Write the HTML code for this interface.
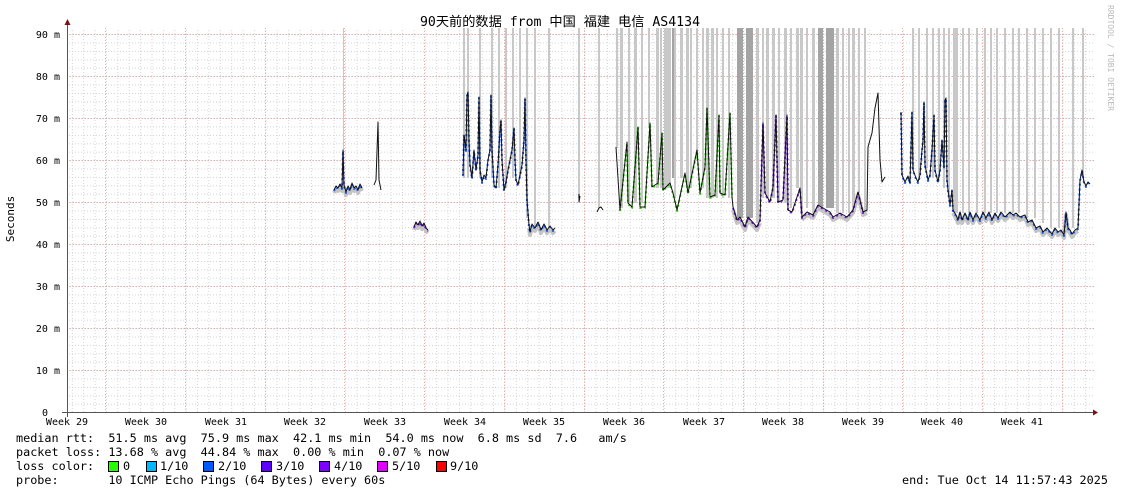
<!DOCTYPE html>
<html><head><meta charset="utf-8"><style>
html,body{margin:0;padding:0;background:#fff;}
body{width:1121px;height:494px;overflow:hidden;position:relative;font-family:"DejaVu Sans Mono","Liberation Mono","Noto Sans CJK SC",monospace;}
.leg{position:absolute;left:16px;font-size:11.8px;white-space:pre;color:#000;line-height:14px;}
.sq{position:absolute;top:461px;width:9px;height:9px;border:1px solid #000;}
</style></head><body>
<svg width="1121" height="494" style="position:absolute;left:0;top:0" xmlns="http://www.w3.org/2000/svg">
<defs>
<pattern id="mv" x="71.8" y="0" width="11.386" height="494" patternUnits="userSpaceOnUse"><line x1="0.5" y1="0" x2="0.5" y2="494" stroke="#d4d4d4" stroke-dasharray="1,2"/></pattern>
<pattern id="mh" x="0" y="0.5" width="1121" height="8.4" patternUnits="userSpaceOnUse"><line x1="0" y1="0.5" x2="1121" y2="0.5" stroke="#d4d4d4" stroke-dasharray="1,2"/></pattern>
</defs>
<rect x="67" y="28" width="1027" height="384" fill="url(#mv)"/>
<rect x="67" y="28" width="1027" height="384" fill="url(#mh)"/>
<g stroke="#eaa" stroke-dasharray="1,2">
<line x1="67" y1="34.5" x2="1094" y2="34.5"/><line x1="67" y1="76.5" x2="1094" y2="76.5"/><line x1="67" y1="118.5" x2="1094" y2="118.5"/><line x1="67" y1="160.5" x2="1094" y2="160.5"/><line x1="67" y1="202.5" x2="1094" y2="202.5"/><line x1="67" y1="244.5" x2="1094" y2="244.5"/><line x1="67" y1="286.5" x2="1094" y2="286.5"/><line x1="67" y1="328.5" x2="1094" y2="328.5"/><line x1="67" y1="370.5" x2="1094" y2="370.5"/>
<line x1="105.5" y1="28" x2="105.5" y2="412"/><line x1="185.5" y1="28" x2="185.5" y2="412"/><line x1="265.5" y1="28" x2="265.5" y2="412"/><line x1="344.5" y1="28" x2="344.5" y2="412"/><line x1="424.5" y1="28" x2="424.5" y2="412"/><line x1="504.5" y1="28" x2="504.5" y2="412"/><line x1="584.5" y1="28" x2="584.5" y2="412"/><line x1="663.5" y1="28" x2="663.5" y2="412"/><line x1="743.5" y1="28" x2="743.5" y2="412"/><line x1="823.5" y1="28" x2="823.5" y2="412"/><line x1="902.5" y1="28" x2="902.5" y2="412"/><line x1="982.5" y1="28" x2="982.5" y2="412"/><line x1="1062.5" y1="28" x2="1062.5" y2="412"/>
</g>
<g fill="#c8c8c8">
<rect x="343" y="28" width="1" height="160"/>
<rect x="463" y="28" width="2" height="150"/><rect x="467" y="28" width="2" height="150"/><rect x="479" y="28" width="2" height="150"/><rect x="491" y="28" width="2" height="150"/><rect x="498" y="28" width="2" height="160"/><rect x="505" y="28" width="2" height="160"/><rect x="512" y="28" width="2" height="150"/><rect x="519" y="28" width="2" height="150"/><rect x="526" y="28" width="2" height="190"/><rect x="534" y="28" width="2" height="200"/><rect x="548" y="28" width="2" height="200"/><rect x="578" y="28" width="2" height="170"/><rect x="598" y="28" width="2" height="180"/>
<rect x="616" y="28" width="2" height="120"/><rect x="620" y="28" width="3" height="180"/><rect x="628" y="28" width="2" height="175"/><rect x="634" y="28" width="3" height="175"/><rect x="641" y="28" width="2" height="175"/><rect x="648" y="28" width="2" height="100"/><rect x="656" y="28" width="3" height="160"/><rect x="660" y="28" width="2" height="160"/><rect x="664" y="28" width="4" height="160"/><rect x="668" y="28" width="3" height="160"/><rect x="674" y="28" width="2" height="170"/><rect x="680" y="28" width="3" height="150"/><rect x="686" y="28" width="3" height="160"/><rect x="690" y="28" width="2" height="160"/><rect x="696" y="28" width="2" height="130"/><rect x="702" y="28" width="2" height="160"/><rect x="706" y="28" width="3" height="170"/><rect x="711" y="28" width="3" height="170"/><rect x="716" y="28" width="2" height="170"/><rect x="722" y="28" width="2" height="170"/><rect x="728" y="28" width="2" height="170"/><rect x="756" y="28" width="3" height="195"/><rect x="762" y="28" width="2" height="170"/><rect x="766" y="28" width="3" height="170"/><rect x="772" y="28" width="3" height="170"/><rect x="778" y="28" width="2" height="175"/><rect x="784" y="28" width="3" height="175"/><rect x="790" y="28" width="2" height="180"/><rect x="796" y="28" width="3" height="160"/><rect x="800" y="28" width="3" height="185"/><rect x="806" y="28" width="2" height="180"/><rect x="812" y="28" width="3" height="185"/><rect x="836" y="28" width="3" height="185"/><rect x="842" y="28" width="2" height="185"/><rect x="848" y="28" width="2" height="185"/><rect x="852" y="28" width="3" height="185"/><rect x="858" y="28" width="2" height="165"/><rect x="864" y="28" width="2" height="185"/>
<rect x="912" y="28" width="2" height="140"/><rect x="918" y="28" width="2" height="150"/><rect x="926" y="28" width="2" height="140"/><rect x="932" y="28" width="2" height="150"/><rect x="938" y="28" width="2" height="150"/><rect x="943" y="28" width="2" height="160"/><rect x="948" y="28" width="2" height="170"/><rect x="953" y="28" width="5" height="185"/><rect x="962" y="28" width="2" height="185"/><rect x="968" y="28" width="2" height="185"/><rect x="976" y="28" width="2" height="185"/><rect x="984" y="28" width="2" height="185"/><rect x="990" y="28" width="2" height="185"/><rect x="996" y="28" width="2" height="185"/><rect x="1004" y="28" width="2" height="185"/><rect x="1012" y="28" width="2" height="185"/><rect x="1018" y="28" width="2" height="185"/><rect x="1026" y="28" width="2" height="190"/><rect x="1034" y="28" width="2" height="190"/><rect x="1042" y="28" width="2" height="195"/><rect x="1050" y="28" width="2" height="200"/><rect x="1058" y="28" width="2" height="200"/><rect x="1072" y="28" width="2" height="200"/><rect x="1082" y="28" width="2" height="150"/>
</g>
<g fill="#a4a4a4">
<rect x="737" y="28" width="6" height="190"/><rect x="746" y="28" width="7" height="190"/><rect x="818" y="28" width="5" height="180"/><rect x="826" y="28" width="8" height="180"/><rect x="672" y="28" width="2" height="150"/>
</g>
<g fill="none" stroke-linejoin="round">
<g stroke="#c4c4c4" stroke-width="4" transform="translate(0,3)">
<polyline points="334,190 336,186 338,188 340,184 342,188 344,185 346,192 348,186 350,190 352,183 354,188 356,186 358,190 360,184 362,188"/>
<polyline points="414,227 416,222 418,225 420,221 422,226 424,223 426,228 428,230"/>
<polyline points="529,225 530,232 532,224 535,228 538,222 541,230 544,224 547,230 550,226 553,230 555,228"/>
<polyline points="733,207 737,220 740,217 745,227 748,217 757,227 760,220"/>
<polyline points="802,217 807,212 813,215 818,205 823,208 830,212 833,217 840,213 847,217 853,210 858,192 863,212 867,210"/>
<polyline points="953,210 956,215 958,220 960,212 962,220 965,213 968,220 970,212 973,220 976,213 980,220 983,212 986,218 989,212 992,220 995,213 998,218 1001,212 1005,217 1010,212 1013,215 1016,213 1020,217 1025,215 1028,222 1032,220 1036,228 1040,226 1043,232 1047,228 1052,234 1055,228 1058,232 1061,230 1064,235 1066,212 1068,228 1070,230 1072,234 1075,230 1078,228"/>
</g>
<g stroke="#1a5cff" stroke-width="2" stroke-dasharray="2,3" transform="translate(0,1)">
<polyline points="334,190 336,186 338,188 340,184 342,188 343,150 344,185 346,192 348,186 350,190 352,183 354,188 356,186 358,190 360,184 362,188"/>
<polyline stroke="#7a14ff" points="414,227 416,222 418,225 420,221 422,226 424,223 426,228 428,230"/>
<polyline points="463,175 464,135 466,150 467,95 468,92 469,140 470,165 472,178 474,150 476,170 478,155 479,97 480,170 482,182 484,175 486,178 488,160 490,150 491,95 492,150 494,185 496,188 498,165 500,130 501,120 502,160 504,190 506,182 508,170 510,160 512,150 514,128 515,160 516,180 518,185 520,175 522,165 524,140 525,98 526,160 527,200 529,225 530,232 532,224 535,228 538,222 541,230 544,224 547,230 550,226 553,230 555,228"/>
<polyline stroke="#26dd00" points="620,210 627,142 628,203 632,207 638,127 640,207 645,207 650,123 652,187 658,183 662,133 663,190 670,183 673,193 677,210 685,173 688,193 697,150 700,193 705,167 707,108 710,197 715,195 719,115 720,193 725,195 730,113 732,197"/>
<polyline stroke="#7a14ff" points="733,207 737,220 740,217 745,227 748,217 757,227 760,220 763,123 765,193 770,202 773,187 776,115 778,202 783,200 787,115 788,210 792,212 800,188 802,217 807,212 813,215 818,205 823,208 830,212 833,217 840,213 847,217 853,210 858,192 863,212 867,210"/>
<polyline points="901,112 902,175 905,182 908,176 910,183 912,112 913,170 916,178 918,182 920,175 922,150 923,140 924,102 925,165 928,180 930,175 932,150 934,115 935,170 938,182 940,170 942,140 944,168 945,100 946,98 947,180 948,190 950,205 952,190 953,210 956,215 958,220 960,212 962,220 965,213 968,220 970,212 973,220 976,213 980,220 983,212 986,218 989,212 992,220 995,213 998,218 1001,212 1005,217 1010,212 1013,215 1016,213 1020,217 1025,215 1028,222 1032,220 1036,228 1040,226 1043,232 1047,228 1052,234 1055,228 1058,232 1061,230 1064,235 1066,212 1068,228 1070,230 1072,234 1075,230 1078,228 1080,180 1082,170 1084,182 1086,186 1088,182 1090,184"/>
</g>
<g stroke="#111" stroke-width="1">
<polyline points="334,190 336,186 338,188 340,184 342,188 343,150 344,185 346,192 348,186 350,190 352,183 354,188 356,186 358,190 360,184 362,188"/>
<polyline points="374,185 376,180 378,122 379,180 381,190"/>
<polyline points="414,227 416,222 418,225 420,221 422,226 424,223 426,228 428,230"/>
<polyline points="463,175 464,135 466,150 467,95 468,92 469,140 470,165 472,178 474,150 476,170 478,155 479,97 480,170 482,182 484,175 486,178 488,160 490,150 491,95 492,150 494,185 496,188 498,165 500,130 501,120 502,160 504,190 506,182 508,170 510,160 512,150 514,128 515,160 516,180 518,185 520,175 522,165 524,140 525,98 526,160 527,200 529,225 530,232 532,224 535,228 538,222 541,230 544,224 547,230 550,226 553,230 555,228"/>
<polyline points="579,194 579,202 580,196"/>
<polyline points="597,212 599,208 601,207 603,210"/>
<polyline points="616,147 620,210 627,142 628,203 632,207 638,127 640,207 645,207 650,123 652,187 658,183 662,133 663,190 670,183 673,193 677,210 685,173 688,193 697,150 700,193 705,167 707,108 710,197 715,195 719,115 720,193 725,195 730,113 732,197 733,207 737,220 740,217 745,227 748,217 757,227 760,220 763,123 765,193 770,202 773,187 776,115 778,202 783,200 787,115 788,210 792,212 800,188 802,217 807,212 813,215 818,205 823,208 830,212 833,217 840,213 847,217 853,210 858,192 863,212 867,210 868,147 872,133 875,108 878,93 880,160 882,182 885,177"/>
<polyline points="901,112 902,175 905,182 908,176 910,183 912,112 913,170 916,178 918,182 920,175 922,150 923,140 924,102 925,165 928,180 930,175 932,150 934,115 935,170 938,182 940,170 942,140 944,168 945,100 946,98 947,180 948,190 950,205 952,190 953,210 956,215 958,220 960,212 962,220 965,213 968,220 970,212 973,220 976,213 980,220 983,212 986,218 989,212 992,220 995,213 998,218 1001,212 1005,217 1010,212 1013,215 1016,213 1020,217 1025,215 1028,222 1032,220 1036,228 1040,226 1043,232 1047,228 1052,234 1055,228 1058,232 1061,230 1064,235 1066,212 1068,228 1070,230 1072,234 1075,230 1078,228 1080,180 1082,170 1084,182 1086,186 1088,182 1090,184"/>
</g>
</g>
<line x1="67.5" y1="417" x2="67.5" y2="24" stroke="#555"/>
<line x1="62" y1="412.5" x2="1094" y2="412.5" stroke="#555"/>
<polygon points="64.5,25 70.5,25 67.5,19" fill="#801010"/>
<polygon points="1093,409.5 1093,415.5 1098,412.5" fill="#801010"/>
<g font-family="DejaVu Sans Mono, monospace" font-size="10" fill="#000" text-anchor="end">
<text x="60" y="38">90 m</text><text x="60" y="80">80 m</text><text x="60" y="122">70 m</text><text x="60" y="164">60 m</text><text x="60" y="206">50 m</text><text x="60" y="248">40 m</text><text x="60" y="290">30 m</text><text x="60" y="332">20 m</text><text x="60" y="374">10 m</text><text x="48" y="416">0</text>
</g>
<g font-family="DejaVu Sans Mono, monospace" font-size="10" fill="#000" text-anchor="middle">
<text x="67" y="425">Week 29</text><text x="146" y="425">Week 30</text><text x="226" y="425">Week 31</text><text x="305" y="425">Week 32</text><text x="385" y="425">Week 33</text><text x="465" y="425">Week 34</text><text x="544" y="425">Week 35</text><text x="624" y="425">Week 36</text><text x="704" y="425">Week 37</text><text x="783" y="425">Week 38</text><text x="863" y="425">Week 39</text><text x="942" y="425">Week 40</text><text x="1022" y="425">Week 41</text>
</g>
<text x="560" y="26" text-anchor="middle" font-family="DejaVu Sans Mono, Noto Sans CJK SC, monospace" font-size="13.2" fill="#000">90天前的数据 from 中国 福建 电信 AS4134</text>
<text transform="translate(14,219) rotate(-90)" text-anchor="middle" font-family="DejaVu Sans Mono, monospace" font-size="11" fill="#000">Seconds</text>
<text transform="translate(1108,5) rotate(90)" font-family="DejaVu Sans Mono, monospace" font-size="8" fill="#bbb">RRDTOOL / TOBI OETIKER</text>
</svg>
<div class="leg" style="top:431px">median rtt:  51.5 ms avg  75.9 ms max  42.1 ms min  54.0 ms now  6.8 ms sd  7.6   am/s</div>
<div class="leg" style="top:445px">packet loss: 13.68 % avg  44.84 % max  0.00 % min  0.07 % now</div>
<div class="leg" style="top:459px">loss color:</div>
<span class="sq" style="left:108px;background:#26ff00"></span><div class="leg" style="top:459px;left:123px">0</div>
<span class="sq" style="left:146px;background:#00b8ff"></span><div class="leg" style="top:459px;left:160px">1/10</div>
<span class="sq" style="left:203px;background:#0059ff"></span><div class="leg" style="top:459px;left:218px">2/10</div>
<span class="sq" style="left:261px;background:#5e00ff"></span><div class="leg" style="top:459px;left:276px">3/10</div>
<span class="sq" style="left:319px;background:#7e00ff"></span><div class="leg" style="top:459px;left:334px">4/10</div>
<span class="sq" style="left:377px;background:#dd00ff"></span><div class="leg" style="top:459px;left:392px">5/10</div>
<span class="sq" style="left:436px;background:#ff0000"></span><div class="leg" style="top:459px;left:450px">9/10</div>
<div class="leg" style="top:473px">probe:       10 ICMP Echo Pings (64 Bytes) every 60s</div>
<div class="leg" style="top:473px;left:902px">end: Tue Oct 14 11:57:43 2025</div>
</body></html>
